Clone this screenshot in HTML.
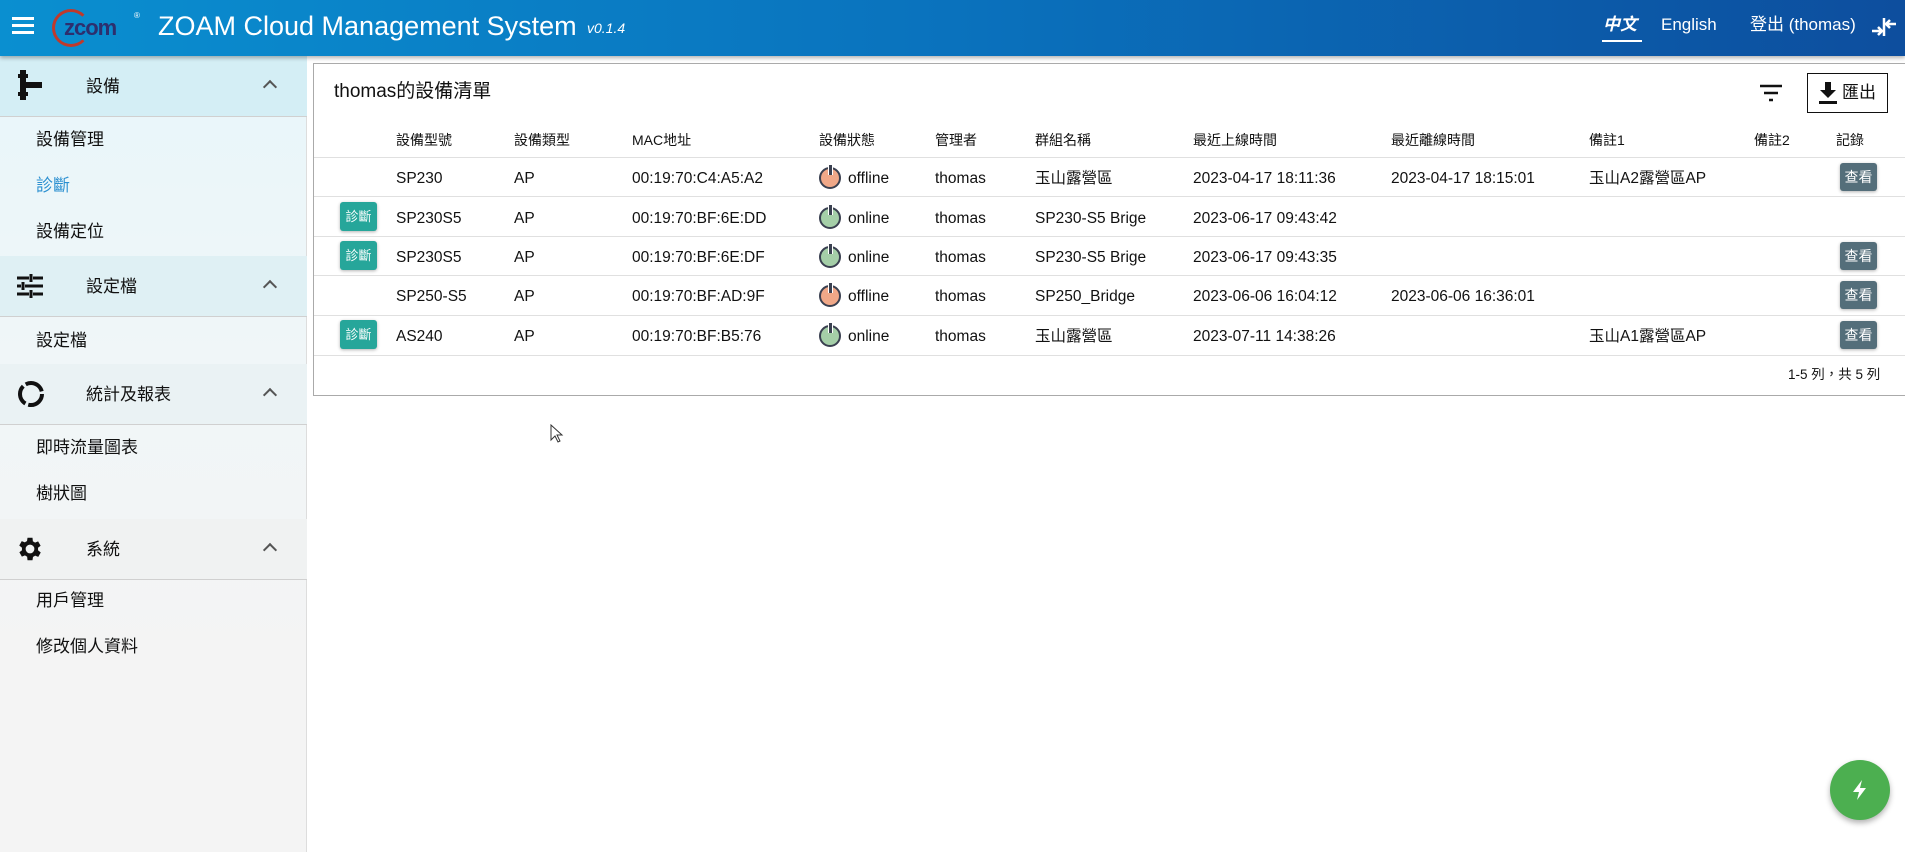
<!DOCTYPE html>
<html><head><meta charset="utf-8"><style>
*{box-sizing:border-box;margin:0;padding:0}
body{width:1905px;height:852px;overflow:hidden;background:#fff;font-family:"Liberation Sans","Noto Sans CJK TC",sans-serif;color:#111;position:relative}
.a{position:absolute;white-space:nowrap;line-height:20px}
#hdr{left:0;top:0;width:1905px;height:56px;background:linear-gradient(90deg,#0a8fd0 0%,#0a72bd 50%,#0d4e9e 100%);box-shadow:0 2px 4px rgba(0,0,0,.3);z-index:3}
#hdr .t{line-height:24px;top:13px;font-size:17px;color:#fff}
#side{left:0;top:56px;width:307px;height:796px;background:#f4f4f4;border-right:1px solid #ddd}
.sh{position:absolute;left:0;width:307px;height:61px;border-bottom:1px solid #d0d0d0;font-size:17px}
.sh span{position:absolute;left:86px;top:20px;line-height:22px}
.sh i{position:absolute;left:265px;top:26px;width:10px;height:10px;border-left:2px solid #555;border-top:2px solid #555;transform:rotate(45deg)}
.si{position:absolute;left:36px;font-size:17px;line-height:22px}
#card{left:313px;top:63px;width:1592px;height:333px;border:1px solid #aaa;border-right:none;background:#fff}
.th{font-size:14px;top:130px}
.ln{position:absolute;left:314px;width:1591px;height:1px;background:#e0e0e0}
.c{font-size:15.5px;transform:translateY(2px)}
.dg{position:absolute;left:340px;width:37px;height:29px;background:#26a69a;color:#fff;font-size:13px;border-radius:3px;text-align:center;line-height:29px;box-shadow:0 1px 3px rgba(0,0,0,.3)}
.vw{position:absolute;left:1840px;width:37px;height:28px;background:#546e7a;color:#fff;font-size:14px;border-radius:3px;text-align:center;line-height:28px;box-shadow:0 1px 3px rgba(0,0,0,.3)}
.pw{position:absolute;left:819px;width:22px;height:22px;border-radius:50%;border:2px solid #3a4050}
.pw:after{content:"";position:absolute;left:7px;top:-4px;width:3px;height:10px;background:#3a4050;border:1.5px solid #fff;border-top:none;border-bottom:none}
.off{background:#f0a888}.on{background:#a5cfa8}
</style></head><body>
<div class="a" id="hdr">
 <div class="a" style="left:12px;top:17px;width:22px;height:3px;background:#fff;box-shadow:0 7px 0 #fff,0 14px 0 #fff"></div>
 <div class="a" style="left:52px;top:9px;width:38px;height:38px;border-radius:50%;border:3px solid #c0392b;border-right-color:transparent"></div>
 <div class="a" style="left:64px;top:16px;font-size:22px;line-height:24px;font-weight:bold;color:#2d2f6e;letter-spacing:-1px">zcom</div>
 <div class="a" style="left:134px;top:6px;font-size:8px;color:#fff">®</div>
 <div class="a" style="left:158px;top:10px;font-size:27px;line-height:32px;color:#fff">ZOAM Cloud Management System</div>
 <div class="a" style="left:587px;top:18px;font-size:14px;color:#fff;font-style:italic">v0.1.4</div>
 <div class="a t" style="left:1603px;font-weight:bold;font-style:italic">中文</div>
 <div class="a" style="left:1602px;top:40px;width:40px;height:2px;background:#fff"></div>
 <div class="a t" style="left:1661px">English</div>
 <div class="a t" style="left:1750px">登出 (thomas)</div>
 <svg class="a" style="left:1870px;top:14px" width="28" height="26" viewBox="0 0 28 26"><path d="M2 17h10M8 13l4 4-4 4M26 10H16M20 6l-4 4 4 4M14 4v18" stroke="#fff" stroke-width="2.5" fill="none"/></svg>
</div>
<div class="a" id="side">
 <div class="a" style="left:0;top:0;width:306px;height:615px;background:linear-gradient(180deg,#e8f6fa 0%,#f0f6f8 50%,#f4f4f4 100%)"></div>
 <div class="sh" style="top:0;background:#d4eef5"><svg class="a" style="left:18px;top:14px" width="26" height="30"><rect x="2" y="0" width="6" height="30" fill="#111"/><rect x="8" y="12" width="16" height="6" fill="#111"/><rect x="0" y="4" width="10" height="4" fill="#111"/><rect x="0" y="22" width="10" height="4" fill="#111"/></svg><span>設備</span><i></i></div>
 <div class="si" style="top:73px">設備管理</div>
 <div class="si" style="top:119px;color:#2a8fd0">診斷</div>
 <div class="si" style="top:165px">設備定位</div>
 <div class="sh" style="top:200px;background:#dff0f4"><svg class="a" style="left:17px;top:18px" width="26" height="24"><path d="M0 4h12M16 4h10M14 0v8M0 12h4M8 12h18M6 8v8M0 20h12M16 20h10M14 16v8" stroke="#111" stroke-width="3"/></svg><span>設定檔</span><i></i></div>
 <div class="si" style="top:274px">設定檔</div>
 <div class="sh" style="top:308px;background:#eaf2f4"><svg class="a" style="left:17px;top:16px" width="28" height="28"><circle cx="14" cy="14" r="11" stroke="#111" stroke-width="4" fill="none" stroke-dasharray="20 3"/></svg><span>統計及報表</span><i></i></div>
 <div class="si" style="top:381px">即時流量圖表</div>
 <div class="si" style="top:427px">樹狀圖</div>
 <div class="sh" style="top:463px;background:#f0f2f2"><svg class="a" style="left:15px;top:15px" width="30" height="30" viewBox="0 0 24 24"><path fill="#111" d="M19.4 13a7.5 7.5 0 000-2l2.1-1.6-2-3.5-2.5 1a7 7 0 00-1.7-1L15 3h-4l-.4 2.7a7 7 0 00-1.7 1l-2.5-1-2 3.5L6.6 11a7.5 7.5 0 000 2l-2.1 1.6 2 3.5 2.5-1a7 7 0 001.7 1L11 21h4l.4-2.7a7 7 0 001.7-1l2.5 1 2-3.5zM13 15.5a3.5 3.5 0 110-7 3.5 3.5 0 010 7z" transform="translate(-1 0)"/></svg><span>系統</span><i></i></div>
 <div class="si" style="top:534px">用戶管理</div>
 <div class="si" style="top:580px">修改個人資料</div>
</div>
<div class="a" id="card"></div>
<div class="a" style="left:334px;top:80px;font-size:19px;line-height:24px">thomas的設備清單</div>
<svg class="a" style="left:1760px;top:84px" width="24" height="18"><path d="M0 2h22M4 9h14M9 16h4" stroke="#111" stroke-width="2.5"/></svg>
<div class="a" style="left:1807px;top:73px;width:81px;height:40px;border:1.5px solid #111"></div>
<svg class="a" style="left:1818px;top:82px" width="20" height="22"><path d="M7 0h6v8h5l-8 8-8-8h5zM1 19h18v3H1z" fill="#111"/></svg>
<div class="a" style="left:1842px;top:82px;font-size:17px;line-height:22px">匯出</div>
<div class="a th" style="left:396px">設備型號</div><div class="a th" style="left:514px">設備類型</div><div class="a th" style="left:632px">MAC地址</div><div class="a th" style="left:819px">設備狀態</div><div class="a th" style="left:935px">管理者</div><div class="a th" style="left:1035px">群組名稱</div><div class="a th" style="left:1193px">最近上線時間</div><div class="a th" style="left:1391px">最近離線時間</div><div class="a th" style="left:1589px">備註1</div><div class="a th" style="left:1754px">備註2</div><div class="a th" style="left:1836px">記錄</div>
<div class="ln" style="top:157px"></div><div class="ln" style="top:196px"></div><div class="ln" style="top:236px"></div><div class="ln" style="top:275px"></div><div class="ln" style="top:315px"></div><div class="ln" style="top:355px"></div>
<!-- row1 -->
<div class="a c" style="left:396px;top:167px">SP230</div><div class="a c" style="left:514px;top:167px">AP</div><div class="a c" style="left:632px;top:167px">00:19:70:C4:A5:A2</div><div class="pw off" style="top:167px"></div><div class="a c" style="left:848px;top:167px">offline</div><div class="a c" style="left:935px;top:167px">thomas</div><div class="a c" style="left:1035px;top:167px">玉山露營區</div><div class="a c" style="left:1193px;top:167px">2023-04-17 18:11:36</div><div class="a c" style="left:1391px;top:167px">2023-04-17 18:15:01</div><div class="a c" style="left:1589px;top:167px">玉山A2露營區AP</div><div class="vw" style="top:163px">查看</div>
<!-- row2 -->
<div class="dg" style="top:202px">診斷</div><div class="a c" style="left:396px;top:207px">SP230S5</div><div class="a c" style="left:514px;top:207px">AP</div><div class="a c" style="left:632px;top:207px">00:19:70:BF:6E:DD</div><div class="pw on" style="top:207px"></div><div class="a c" style="left:848px;top:207px">online</div><div class="a c" style="left:935px;top:207px">thomas</div><div class="a c" style="left:1035px;top:207px">SP230-S5 Brige</div><div class="a c" style="left:1193px;top:207px">2023-06-17 09:43:42</div>
<!-- row3 -->
<div class="dg" style="top:241px">診斷</div><div class="a c" style="left:396px;top:246px">SP230S5</div><div class="a c" style="left:514px;top:246px">AP</div><div class="a c" style="left:632px;top:246px">00:19:70:BF:6E:DF</div><div class="pw on" style="top:246px"></div><div class="a c" style="left:848px;top:246px">online</div><div class="a c" style="left:935px;top:246px">thomas</div><div class="a c" style="left:1035px;top:246px">SP230-S5 Brige</div><div class="a c" style="left:1193px;top:246px">2023-06-17 09:43:35</div><div class="vw" style="top:242px">查看</div>
<!-- row4 -->
<div class="a c" style="left:396px;top:285px">SP250-S5</div><div class="a c" style="left:514px;top:285px">AP</div><div class="a c" style="left:632px;top:285px">00:19:70:BF:AD:9F</div><div class="pw off" style="top:285px"></div><div class="a c" style="left:848px;top:285px">offline</div><div class="a c" style="left:935px;top:285px">thomas</div><div class="a c" style="left:1035px;top:285px">SP250_Bridge</div><div class="a c" style="left:1193px;top:285px">2023-06-06 16:04:12</div><div class="a c" style="left:1391px;top:285px">2023-06-06 16:36:01</div><div class="vw" style="top:281px">查看</div>
<!-- row5 -->
<div class="dg" style="top:320px">診斷</div><div class="a c" style="left:396px;top:325px">AS240</div><div class="a c" style="left:514px;top:325px">AP</div><div class="a c" style="left:632px;top:325px">00:19:70:BF:B5:76</div><div class="pw on" style="top:325px"></div><div class="a c" style="left:848px;top:325px">online</div><div class="a c" style="left:935px;top:325px">thomas</div><div class="a c" style="left:1035px;top:325px">玉山露營區</div><div class="a c" style="left:1193px;top:325px">2023-07-11 14:38:26</div><div class="a c" style="left:1589px;top:325px">玉山A1露營區AP</div><div class="vw" style="top:321px">查看</div>
<div class="a" style="left:1788px;top:365px;font-size:13.5px">1-5 列，共 5 列</div>
<svg class="a" style="left:550px;top:424px" width="14" height="20"><path d="M1 1v15l4-4 3 6 2-1-3-6h5z" fill="#fff" stroke="#333"/></svg>
<div class="a" style="left:1830px;top:760px;width:60px;height:60px;border-radius:50%;background:#4caf50;box-shadow:0 3px 6px rgba(0,0,0,.3)"></div>
<svg class="a" style="left:1848px;top:778px" width="24" height="24" viewBox="0 0 24 24"><path d="M14 2L5 14h6l-2 8 9-12h-6z" fill="#fff"/></svg>
</body></html>
